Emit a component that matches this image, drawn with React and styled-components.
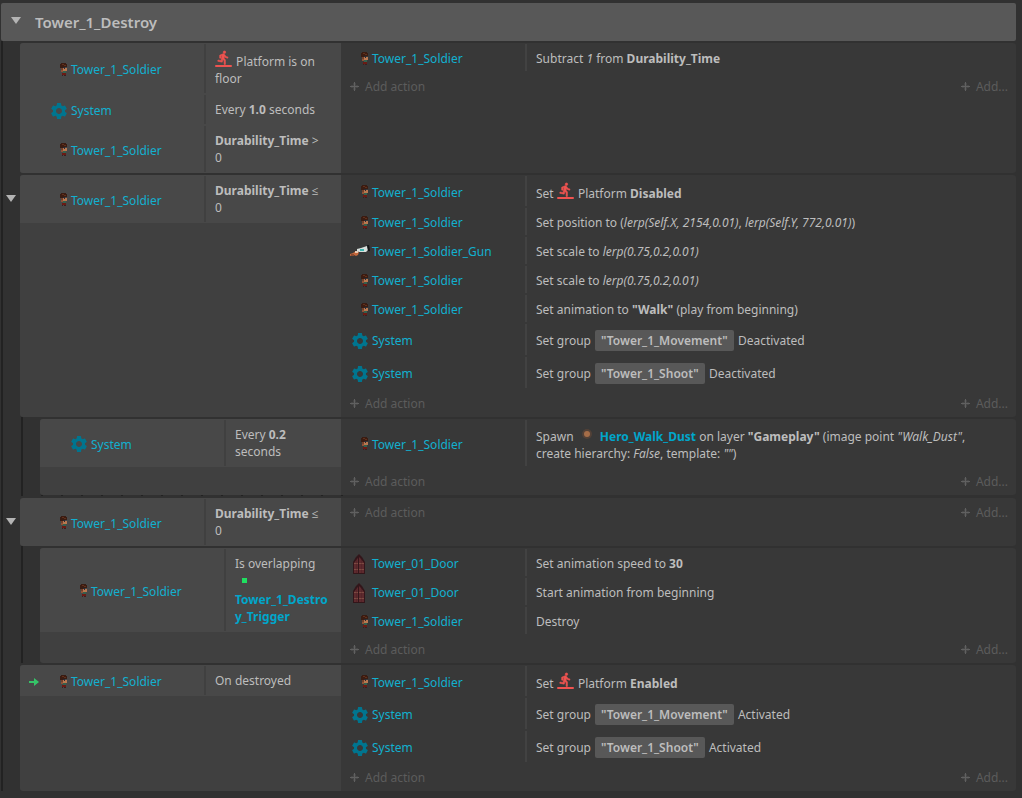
import React from 'react'
import styled, { createGlobalStyle, css } from 'styled-components'
import { MdSettings } from 'react-icons/md'

const GlobalStyle = createGlobalStyle`
  body {
    margin: 0;
    background: #313131;
    color: #bdbdbd;
    font-family: "Noto Sans", "Open Sans", sans-serif;
    font-size: 12px;
    line-height: 17px;
  }

  button {
    margin: 0;
    padding: 0;
    border: 0;
    background: none;
    color: inherit;
    font: inherit;
    cursor: pointer;
  }
`

const Sheet = styled.main`
  padding: 3px 6px 6px 1px;
`

const GroupHeader = styled.header`
  display: flex;
  align-items: center;
  height: 38px;
  border-radius: 2px;
  background: #585858;

  h2 {
    margin: 0;
    font-size: 15px;
    font-weight: 600;
    line-height: 20px;
  }
`

const HeaderToggle = styled.button`
  display: flex;
  justify-content: center;
  width: 30px;
  padding-bottom: 4px;
  margin-right: 4px;
`

const Triangle = styled.span`
  border: 5px solid transparent;
  border-top: 7px solid #b4b4b4;
  border-bottom: 0;
`

const Branch = styled.div`
  margin-left: ${props => (props.$nested ? '18px' : '0')};
  border-left: 2px solid #222222;
`

const EventRow = styled.article`
  display: flex;
  padding-top: 2px;
`

const Gutter = styled.div`
  flex: 0 0 17px;
`

const EventToggle = styled.button`
  display: flex;
  align-items: center;
  justify-content: center;
  width: 16px;
  height: 46px;
`

const Conditions = styled.section`
  flex: 0 0 ${props => (props.$nested ? '301px' : '321px')};
  overflow: hidden;
  border-radius: 3px 0 0 3px;
  background: #404040;
`

const Actions = styled.section`
  flex: 1;
  min-width: 0;
  border-radius: 0 3px 3px 0;
  background: #383838;
`

const Line = styled.div`
  display: flex;
`

const ConditionLine = styled(Line)`
  background: #484848;
`

const ObjectCell = styled.div`
  display: flex;
  flex: 0 0 184px;
  align-items: center;
  gap: 2px;
  box-sizing: border-box;
  padding: 2px 0 0 9px;
  color: #12b0cf;

  svg {
    flex: none;
  }
`

const TriggerSlot = styled.span`
  display: flex;
  flex: 0 0 18px;
`

const TextCell = styled.div`
  flex: 1;
  min-width: 0;
  margin: 1px 0;
  padding: 6px 9px 4px;
  border-left: 2px solid #424242;

  ${props =>
    props.$condition &&
    css`
      padding: 6px 9px;
      border-color: #404040;
      overflow-wrap: anywhere;
    `}
`

const InlineIcon = styled.span`
  display: inline-flex;
  vertical-align: ${props => (props.$low ? '-2px' : '-1px')};
`

const ObjectName = styled.b`
  color: #00a6cb;
`

const Chip = styled.span`
  display: inline-block;
  padding: 2px 6px;
  margin: 0 1px;
  border-radius: 2px;
  background: #585858;
  font-weight: 600;
`

const AddLine = styled.div`
  display: flex;
  justify-content: space-between;
  height: 28px;
  padding: 0 8px 0 9px;
`

const AddButton = styled.button`
  display: flex;
  align-items: center;
  gap: 6px;
  color: #5c5c5c;
`

const DropMarks = styled.div`
  width: 318px;
  height: 1px;
  margin-left: 18px;
  background: repeating-linear-gradient(to right, #222222 0 2px, transparent 2px 20px);
`

const GearIcon = () => <MdSettings size={20} color="#00758f" />

const SoldierIcon = () => (
  <svg width="20" height="20" viewBox="0 0 20 20" shapeRendering="crispEdges">
    <path fill="#3a1c12" d="M12 3h5v1h1v3h-2v1h-2v1h-2V8h-1V4h1z" />
    <path fill="#61301c" d="M13 4h2v1h-2zM15 5h2v1h-2z" />
    <path fill="#b97850" d="M14 8h4v3h-4z" />
    <path fill="#74402a" d="M12 8h2v2h-2zM13 11h1v1h-1z" />
    <path fill="#2a2a33" d="M14 7h2v1h-2zM15 8h1v1h-1z" />
    <path fill="#35604d" d="M14 11h3v2h-3z" />
    <path fill="#8f5236" d="M12 10h2v2h-2z" />
    <path fill="#6b1a14" d="M13 13h4v2h-4z" />
    <path fill="#3a2020" d="M13 15h1v1h-1zM15 15h2v1h-2z" />
  </svg>
)

const GunIcon = () => (
  <svg width="20" height="20" viewBox="0 0 20 20">
    <path fill="#c5683c" d="M0 12l3-1 3-2 3 1-1 3-2 1-2-1-4 1z" />
    <path fill="#8c4a30" d="M1 12h3v2H1z" />
    <path fill="#e9c9b0" d="M5 9h3v2H5z" />
    <path fill="#d7dfdc" d="M7 7l4-1 6-2 1 4-2 2H9l-2-1z" />
    <path fill="#3fb5ae" d="M10 7h4v2h-4z" />
    <path fill="#15181a" d="M17 3h2l1 6h-2z" />
  </svg>
)

const DoorIcon = () => (
  <svg width="20" height="20" viewBox="0 0 20 20">
    <path fill="#32161a" d="M9 0l3 3 3 5v12H3V8l3-5z" />
    <path fill="#5e2a2e" d="M9 3l2 2 3 4v10H4V9l3-4z" />
    <path fill="#7e4a42" d="M4 9h10v1H4zM4 15h10v1H4z" />
    <path fill="#32161a" d="M8 1h1v19H8z" />
    <path fill="#32161a" opacity="0.2" d="M6 5h1v14H6zM11 5h1v14h-1z" />
  </svg>
)

const PlatformIcon = () => (
  <InlineIcon $low>
    <svg width="18" height="18" viewBox="0 0 18 18" fill="#ef5350">
      <svg x="1" y="0" width="15" height="15" viewBox="0 0 24 24" stroke="#ef5350">
        <path d="M13.5 5.5a2 2 0 1 0 0-4 2 2 0 0 0 0 4zM9.9 19.4l1-4.4 2.1 2v6h2v-7.5l-2.1-2 .6-3c1.3 1.5 3.3 2.5 5.5 2.5v-2c-1.9 0-3.5-1-4.3-2.4l-1-1.6c-.4-.6-1-1-1.7-1-.3 0-.5.1-.8.1L5.900 8.300V13h2V9.600l1.800-.7-1.600 8.100-4.900-1-.4 2z" />
      </svg>
      <rect x="0" y="15" width="17" height="2" rx="1" />
    </svg>
  </InlineIcon>
)

const DustIcon = () => (
  <InlineIcon>
    <svg width="20" height="16" viewBox="0 0 20 16">
      <circle cx="10" cy="8" r="5" fill="#6b4a35" opacity="0.5" />
      <circle cx="10" cy="8" r="3" fill="#a56d48" />
    </svg>
  </InlineIcon>
)

const TriggerBoxIcon = () => (
  <InlineIcon>
    <svg width="20" height="16" viewBox="0 0 20 16">
      <rect x="7" y="6" width="5" height="5" fill="#1fe060" />
    </svg>
  </InlineIcon>
)

const ArrowIcon = () => (
  <svg width="12" height="10" viewBox="0 0 12 10" fill="#35c468">
    <path d="M0 4h5V1l5 4-5 4V6H0z" />
  </svg>
)

const PlusIcon = () => (
  <svg width="9" height="9" viewBox="0 0 9 9" fill="#606060">
    <path d="M4 0h1v4h4v1H5v4H4V5H0V4h4z" />
    <path d="M3 1h3v7H3zM1 3h7v3H1z" opacity="0.35" />
  </svg>
)

const OBJECTS = {
  soldier: { name: 'Tower_1_Soldier', Icon: SoldierIcon },
  gun: { name: 'Tower_1_Soldier_Gun', Icon: GunIcon },
  door: { name: 'Tower_01_Door', Icon: DoorIcon },
  system: { name: 'System', Icon: GearIcon },
}

const everySecond = <>Every <b>1.0</b> seconds</>
const durabilityAbove = <><b>Durability_Time</b> &gt;<br />0</>
const durabilityEmpty = <><b>Durability_Time</b> ≤<br />0</>
const setScale = <>Set scale to <i>lerp(0.75,0.2,0.01)</i></>
const setGroup = (name, state) => <>Set group <Chip>"{name}"</Chip> {state}</>
const setPlatform = state => <>Set <PlatformIcon /> Platform <b>{state}</b></>

const EVENTS = [
  {
    conditions: [
      ['soldier', <><PlatformIcon /> Platform is on floor</>],
      ['system', everySecond],
      ['soldier', durabilityAbove],
    ],
    actions: [['soldier', <>Subtract <i>1</i> from <b>Durability_Time</b></>]],
  },
  {
    conditions: [['soldier', durabilityEmpty]],
    actions: [
      ['soldier', setPlatform('Disabled')],
      ['soldier', <>Set position to (<i>lerp(Self.X, 2154,0.01)</i>, <i>lerp(Self.Y, 772,0.01)</i>)</>],
      ['gun', setScale],
      ['soldier', setScale],
      ['soldier', <>Set animation to <b>"Walk"</b> (play from beginning)</>],
      ['system', setGroup('Tower_1_Movement', 'Deactivated')],
      ['system', setGroup('Tower_1_Shoot', 'Deactivated')],
    ],
    marked: true,
    children: [
      {
        conditions: [['system', <>Every <b>0.2</b><br />seconds</>]],
        actions: [
          [
            'soldier',
            <>
              Spawn <DustIcon /> <ObjectName>Hero_Walk_Dust</ObjectName> on layer <b>"Gameplay"</b> (image
              point <i>"Walk_Dust"</i>,<br />
              create hierarchy: <i>False</i>, template: <i>""</i>)
            </>,
          ],
        ],
      },
    ],
  },
  {
    conditions: [['soldier', durabilityEmpty]],
    actions: [],
    children: [
      {
        conditions: [
          ['soldier', <>Is overlapping <TriggerBoxIcon /> <ObjectName>Tower_1_Destroy_Trigger</ObjectName></>],
        ],
        actions: [
          ['door', <>Set animation speed to <b>30</b></>],
          ['door', 'Start animation from beginning'],
          ['soldier', 'Destroy'],
        ],
      },
    ],
  },
  {
    trigger: true,
    conditions: [['soldier', 'On destroyed']],
    actions: [
      ['soldier', setPlatform('Enabled')],
      ['system', setGroup('Tower_1_Movement', 'Activated')],
      ['system', setGroup('Tower_1_Shoot', 'Activated')],
    ],
  },
]

function ObjectLabel({ id, children }) {
  const { name, Icon } = OBJECTS[id]
  return (
    <ObjectCell>
      {children}
      <Icon />
      <span>{name}</span>
    </ObjectCell>
  )
}

function Event({ event, nested }) {
  return (
    <>
      <EventRow>
        <Gutter>
          {event.children && (
            <EventToggle aria-label="Toggle sub-events">
              <Triangle />
            </EventToggle>
          )}
        </Gutter>
        <Conditions $nested={nested}>
          {event.conditions.map(([id, text], i) => (
            <ConditionLine key={i}>
              <ObjectLabel id={id}>
                <TriggerSlot>{event.trigger && <ArrowIcon />}</TriggerSlot>
              </ObjectLabel>
              <TextCell $condition>{text}</TextCell>
            </ConditionLine>
          ))}
        </Conditions>
        <Actions>
          {event.actions.map(([id, text], i) => (
            <Line key={i}>
              <ObjectLabel id={id} />
              <TextCell>{text}</TextCell>
            </Line>
          ))}
          <AddLine>
            <AddButton><PlusIcon />Add action</AddButton>
            <AddButton><PlusIcon />Add...</AddButton>
          </AddLine>
        </Actions>
      </EventRow>
      {event.children && (
        <Branch $nested>
          {event.children.map((child, i) => (
            <Event key={i} event={child} nested />
          ))}
          {event.marked && <DropMarks />}
        </Branch>
      )}
    </>
  )
}

export default function App() {
  return (
    <>
      <GlobalStyle />
      <Sheet>
        <GroupHeader>
          <HeaderToggle aria-label="Toggle group">
            <Triangle />
          </HeaderToggle>
          <h2>Tower_1_Destroy</h2>
        </GroupHeader>
        <Branch>
          {EVENTS.map((event, i) => (
            <Event key={i} event={event} />
          ))}
        </Branch>
      </Sheet>
    </>
  )
}
